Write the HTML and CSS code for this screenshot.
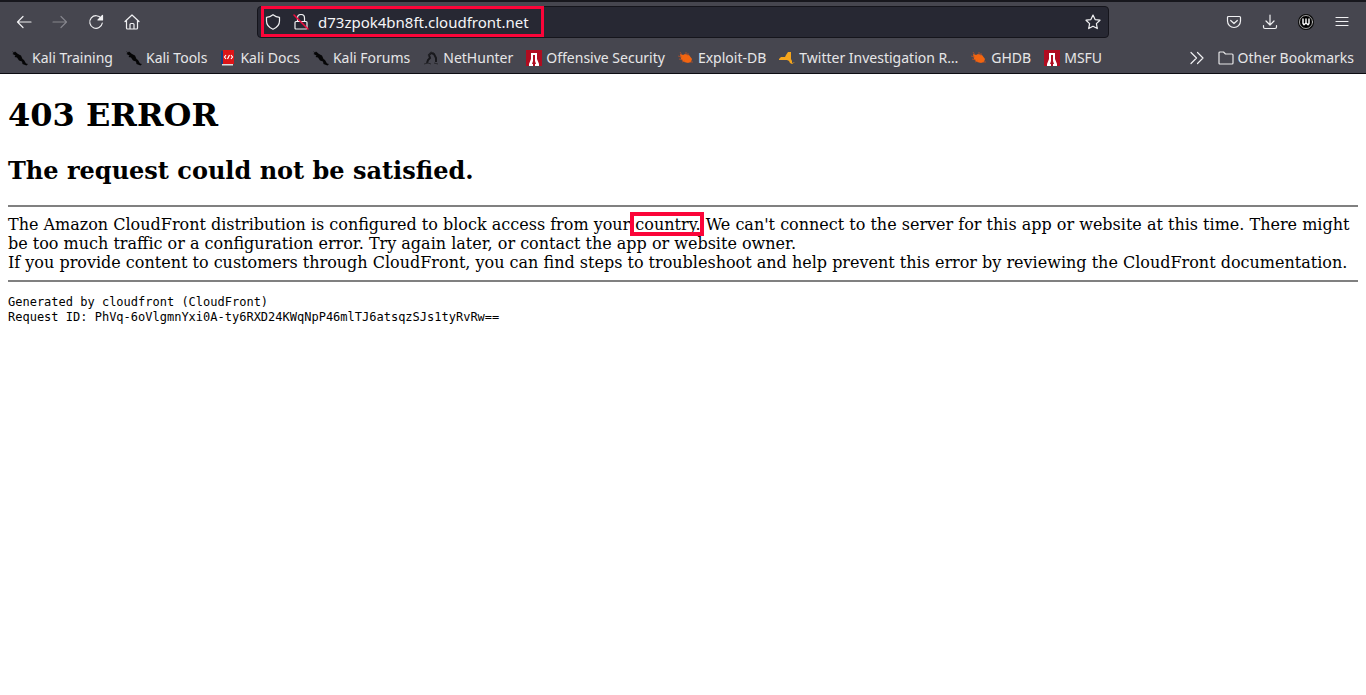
FILE: index.html
```html
<!DOCTYPE html>
<html lang="en">
<head>
<meta charset="utf-8">
<title>ERROR: The request could not be satisfied</title>
<link rel="stylesheet" href="styles.css">
</head>
<body>
<svg class="sprite" aria-hidden="true">
  <symbol id="kali" viewBox="0 0 16 16"><path d="M0 1 2 2.500 3 1.500 6 4 9 5.500 10.500 9 12 10 14 13.500 16 14 14.500 15.500 10.500 14 10 11.500 7 10.500 5 7.500 2.500 7 3.500 5.500.5 4 1.500 3Z" fill="#050506"/></symbol>
  <symbol id="offsec" viewBox="0 0 16 16"><path d="M0 0h16v16H0Z" fill="#b00c20"/><path d="M5 3h6v6l2 5v2H9v-2h1l-1-3V5H7v6l-1 3h1v2H3v-2l2-5Z" fill="#fff"/></symbol>
  <symbol id="bug" viewBox="0 0 16 16"><path d="M2 4 5 5 7 4l4 1 3 4-1 3-3 1-4-1-3-3Z" fill="#f26510"/><path d="M2 2l2 3M0 6l4 1M1 9l4 1M4 12l3-1M10 13v-1M12 12h3M8 2v3M10 3v3" stroke="#c65322" stroke-width=".7" fill="none"/></symbol>
</svg>
<header class="browser">
  <nav class="toolbar" aria-label="Navigation">
    <div class="group">
      <button class="tool" aria-label="Back"><svg class="icon" viewBox="0 0 16 16"><path d="M15 8H1.500M7 2.500 1.500 8 7 13.500"/></svg></button>
      <button class="tool" aria-label="Forward" disabled><svg class="icon" viewBox="0 0 16 16"><path d="M1 8h13.500M9 2.500 14.500 8 9 13.500"/></svg></button>
      <button class="tool" aria-label="Reload"><svg class="icon" viewBox="0 0 16 16"><path d="M13.300 4.500A6.300 6.300 0 1 0 14.300 9"/><path class="solid" d="M14.500 1.500v4.500H10Z"/></svg></button>
      <button class="tool" aria-label="Home"><svg class="icon" viewBox="0 0 16 16"><path d="M1 7.500 8 1l7 6.500M2.500 6.500V14q0 1 1 1h9q1 0 1-1V6.500M6 15v-4.500q0-1 1-1h2q1 0 1 1V15"/></svg></button>
    </div>
    <div class="urlbar">
      <svg class="icon" viewBox="0 0 16 16"><path d="M8 .7Q11 3 14.500 3.300V7q0 5.500-6.500 8.300Q1.500 12.500 1.500 7V3.300Q5 3 8 .7Z"/></svg>
      <svg class="icon lock" viewBox="0 0 16 16"><path d="M4.500 7V4a3.500 3.500 0 0 1 7 0v3M3 7.500h10q1 0 1 1V14q0 1-1 1H3q-1 0-1-1V8.500q0-1 1-1Z"/><path class="slash" d="M1 1 15 15"/></svg>
      <input class="address" type="text" aria-label="Address" value="d73zpok4bn8ft.cloudfront.net">
      <button class="star" aria-label="Bookmark this page"><svg class="icon" viewBox="0 0 16 16"><path d="m8 1 2.100 4.600 4.900.6-3.600 3.400.9 5L8 12.200l-4.300 2.400.9-5L1 6.200l4.900-.6Z"/></svg></button>
      <span class="url-mark"></span>
    </div>
    <div class="group">
      <button class="tool" aria-label="Save to Pocket"><svg class="icon" viewBox="0 0 16 16"><path d="M2.500 2.500h11q1 0 1 1V7a6.500 6.500 0 0 1-13 0V3.500q0-1 1-1ZM4.700 6.500 8 9.500l3.300-3"/></svg></button>
      <button class="tool" aria-label="Downloads"><svg class="icon" viewBox="0 0 16 16"><path d="M8 1v10M4 7l4 4 4-4M1.500 11.500V13q0 1.500 1.500 1.500h10q1.500 0 1.500-1.500v-1.500"/></svg></button>
      <button class="tool" aria-label="Extension"><svg class="icon" viewBox="0 0 16 16"><circle cx="8" cy="8" r="7.500" fill="#000" stroke="#111"/><circle cx="8" cy="8" r="6.500" stroke="#ccc" stroke-width=".8"/><path d="M5 5v4.500l1 1.200L8 9l2 1.700 1-1.200V5M8 5v4" stroke="#fff" stroke-width="1.400"/></svg></button>
      <button class="tool" aria-label="Menu"><svg class="icon" viewBox="0 0 16 16"><path d="M2 3.500h12M2 7.500h12M2 11.500h12"/></svg></button>
    </div>
  </nav>
  <nav class="bookmarks" aria-label="Bookmarks">
    <a href="#"><svg class="fav"><use href="#kali"/></svg>Kali Training</a>
    <a href="#"><svg class="fav"><use href="#kali"/></svg>Kali Tools</a>
    <a href="#"><svg class="fav" viewBox="0 0 16 16"><path d="M1 1h2v13H1Z" fill="#173c7c"/><path d="M3 0h11v14H3Z" fill="#dc1518"/><path d="M2 14h11v1.500H2Z" fill="#ddd"/><path d="M6 5 4.500 7 6 9M11 5l1.500 2L11 9M7.500 9l2-4" stroke="#fff" stroke-width="1.200" fill="none"/></svg>Kali Docs</a>
    <a href="#"><svg class="fav"><use href="#kali"/></svg>Kali Forums</a>
    <a href="#"><svg class="fav" viewBox="0 0 16 16"><path d="M4 13 5 10 7 8 6 5 8 3l3 1 2 4v4" stroke="#18181c" stroke-width="2" fill="none"/><path d="M5 6 8 2l3 1M1 14l4-1 3 1M11 13l4 1" stroke="#26262b" fill="none"/></svg>NetHunter</a>
    <a href="#"><svg class="fav"><use href="#offsec"/></svg>Offensive Security</a>
    <a href="#"><svg class="fav"><use href="#bug"/></svg>Exploit-DB</a>
    <a href="#"><svg class="fav" viewBox="0 0 16 16"><path d="M0 9 2 7h4l1-2 2-3h3v7l1 2v2l3-1-3 2-2-1-1-2-2-1H0Z" fill="#f5a51c"/></svg>Twitter Investigation R…</a>
    <a href="#"><svg class="fav"><use href="#bug"/></svg>GHDB</a>
    <a href="#"><svg class="fav"><use href="#offsec"/></svg>MSFU</a>
    <button class="more" aria-label="Show more bookmarks"><svg class="icon" viewBox="0 0 16 16"><path d="m2 2.500 5.500 5.500L2 13.500M8.500 2.500 14 8l-5.500 5.500"/></svg></button>
    <a href="#"><svg class="icon" viewBox="0 0 16 16"><path d="M2 2h3.500l2 2H14q1 0 1 1v8q0 1-1 1H2q-1 0-1-1V3q0-1 1-1Z"/></svg>Other Bookmarks</a>
  </nav>
</header>
<main class="page">
  <h1>403 ERROR</h1>
  <h2>The request could not be satisfied.</h2>
  <hr>
  <p>The Amazon CloudFront distribution is configured to block access from your <span class="marked">country.</span> We can't connect to the server for this app or website at this time. There might be too much traffic or a configuration error. Try again later, or contact the app or website owner.<br>If you provide content to customers through CloudFront, you can find steps to troubleshoot and help prevent this error by reviewing the CloudFront documentation.</p>
  <hr>
  <pre>Generated by cloudfront (CloudFront)
Request ID: PhVq-6oVlgmnYxi0A-ty6RXD24KWqNpP46mlTJ6atsqzSJs1tyRvRw==</pre>
</main>
</body>
</html>
```
FILE: styles.css
```css
* { box-sizing: border-box; }
body { margin: 0; background: #fff; color: #000; }
button { border: 0; padding: 0; background: none; color: inherit; }
.sprite { display: none; }

.browser {
  background: #46464f;
  border-top: 2px solid #17171d;
  border-bottom: 1px solid #0d0d12;
  color: #f0f0f2;
  font: 15px/20px "Noto Sans", sans-serif;
}
.toolbar {
  display: flex;
  align-items: center;
  justify-content: space-between;
  height: 40px;
  padding: 0 6px;
}
.group { display: flex; }
.tool {
  display: flex;
  align-items: center;
  justify-content: center;
  width: 36px;
  height: 32px;
}
.tool:disabled { color: #85858c; }
.icon {
  flex: none;
  width: 16px;
  height: 16px;
  fill: none;
  stroke: currentColor;
  stroke-width: 1.2;
  stroke-linejoin: round;
  stroke-linecap: round;
}
.solid { fill: currentColor; }
.slash { stroke: #f20b3f; stroke-width: 1.5; }

.urlbar {
  position: relative;
  display: flex;
  align-items: center;
  flex: 0 1 852px;
  height: 32px;
  padding: 0 7px;
  border: 1px solid #15151c;
  border-radius: 4px;
  background: #272833;
}
.lock { margin-left: 12px; }
.address {
  flex: 1;
  min-width: 0;
  margin-left: 9px;
  padding: 0;
  border: 0;
  background: none;
  color: #f5f5f7;
  font: inherit;
}
.star { display: flex; }
.url-mark {
  position: absolute;
  top: -1px;
  left: 3px;
  width: 283px;
  height: 31px;
  border: 3px solid #fb0539;
  pointer-events: none;
}

.bookmarks {
  display: flex;
  align-items: center;
  gap: 13px;
  height: 31px;
  padding: 0 12px;
  font-size: 14px;
  white-space: nowrap;
}
.bookmarks a {
  display: flex;
  align-items: center;
  gap: 4px;
  color: #e6e6e8;
  text-decoration: none;
}
.fav { flex: none; width: 16px; height: 16px; }
.more { display: flex; margin-left: auto; }

.page {
  display: flow-root;
  margin: 0 8px;
  font: 16px/19px "DejaVu Serif", serif;
}
h1 { margin: 22px 0; font-size: 32px; line-height: 38px; }
h2 { margin: 20px 0; font-size: 24px; line-height: 29px; }
hr { height: 2px; margin: 8px 0; border: 0; background: #808080; }
p { margin: 0; }
.marked { position: relative; }
.marked::after {
  content: "";
  position: absolute;
  inset: -3px -3px -2px -5px;
  border: 4px solid #fb0539;
}
pre { margin: 13px 0; font: 12px/15px "DejaVu Sans Mono", monospace; }
```
